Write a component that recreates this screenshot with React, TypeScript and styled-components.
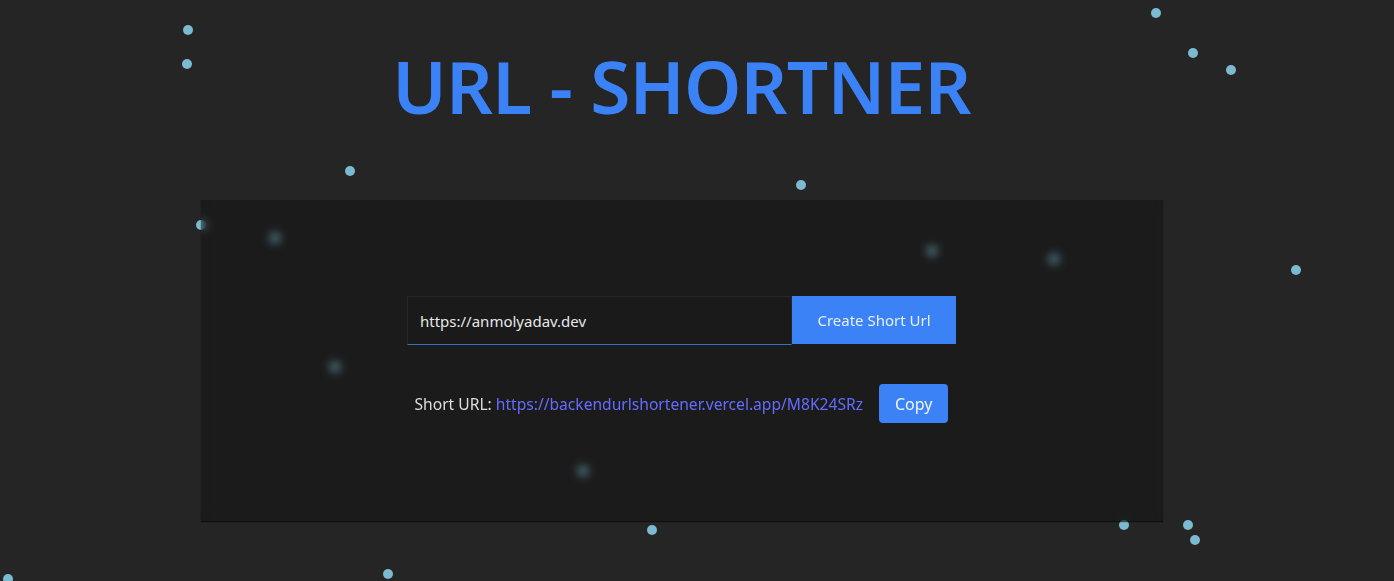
import React, { useState } from 'react';
import styled, { createGlobalStyle } from 'styled-components';

const GlobalStyle = createGlobalStyle`
  html, body {
    margin: 0;
    padding: 0;
    background-color: #252525;
    font-family: "Noto Sans", "Open Sans", sans-serif;
    overflow: hidden;
  }
`;

const Page = styled.div`
  position: relative;
  width: 1394px;
  height: 581px;
  box-sizing: border-box;
  padding-right: 31px;
  display: flex;
  flex-direction: column;
  align-items: center;
  overflow: hidden;
`;

const Particles = styled.div`
  position: absolute;
  inset: 0;
  z-index: 0;
`;

const Dot = styled.span`
  position: absolute;
  width: 10px;
  height: 10px;
  margin: -5px 0 0 -5px;
  border-radius: 50%;
  background-color: #7bbad0;
`;

const Title = styled.h1`
  position: relative;
  z-index: 1;
  margin: 42px 0 0;
  height: 88px;
  font-size: 73px;
  font-weight: 600;
  line-height: 88px;
  color: #3b82f6;
  letter-spacing: -0.8px;
`;

const Card = styled.div`
  position: relative;
  z-index: 1;
  margin-top: 70px;
  width: 962px;
  height: 321px;
  box-sizing: border-box;
  padding-top: 96px;
  display: flex;
  flex-direction: column;
  align-items: center;
  gap: 39px;
  background-color: rgba(0, 0, 0, 0.27);
  backdrop-filter: blur(5px);
  box-shadow: 0 1px 1px rgba(0, 0, 0, 0.6);
`;

const Form = styled.form`
  display: flex;
  align-items: stretch;
`;

const UrlInput = styled.input`
  width: 385px;
  height: 49px;
  box-sizing: border-box;
  padding: 0 12px;
  background-color: #1a1a1a;
  border: 1px solid #262626;
  border-bottom: 1px solid #3b6fc0;
  color: #e8e8e8;
  font-family: inherit;
  font-size: 15px;
  outline: none;
`;

const CreateButton = styled.button`
  width: 164px;
  height: 48px;
  background-color: #3b82f6;
  color: #e8eefa;
  border: none;
  font-family: inherit;
  font-size: 15px;
  cursor: pointer;
`;

const ResultRow = styled.div`
  display: flex;
  align-items: center;
  gap: 16px;
  font-size: 15.6px;
  color: #dedede;
`;

const Link = styled.a`
  color: #646cff;
  text-decoration: none;
`;

const CopyButton = styled.button`
  height: 39px;
  padding: 0 16px;
  background-color: #3b82f6;
  color: #f2f5fb;
  border: none;
  border-radius: 4px;
  font-family: inherit;
  font-size: 16px;
  cursor: pointer;
`;

const dots: [number, number][] = [
  [188, 30], [187, 64], [350, 171], [801, 185], [1156, 13], [1193, 53],
  [1231, 70], [1296, 270], [1124, 525], [1188, 525], [1195, 540], [652, 530],
  [388, 574], [8, 579], [201, 225], [275, 238], [932, 251], [1054, 259],
  [335, 367], [583, 471],
];

export default function App() {
  const [url, setUrl] = useState('https://anmolyadav.dev');
  const shortUrl = 'https://backendurlshortener.vercel.app/M8K24SRz';

  return (
    <>
      <GlobalStyle />
      <Page>
        <Particles>
          {dots.map(([x, y], i) => (
            <Dot key={i} style={{ left: x, top: y }} />
          ))}
        </Particles>
        <Title>URL - SHORTNER</Title>
        <Card>
          <Form onSubmit={e => e.preventDefault()}>
            <UrlInput value={url} onChange={e => setUrl(e.target.value)} />
            <CreateButton type="submit">Create Short Url</CreateButton>
          </Form>
          <ResultRow>
            <span>
              Short URL: <Link href={shortUrl}>{shortUrl}</Link>
            </span>
            <CopyButton>Copy</CopyButton>
          </ResultRow>
        </Card>
      </Page>
    </>
  );
}
